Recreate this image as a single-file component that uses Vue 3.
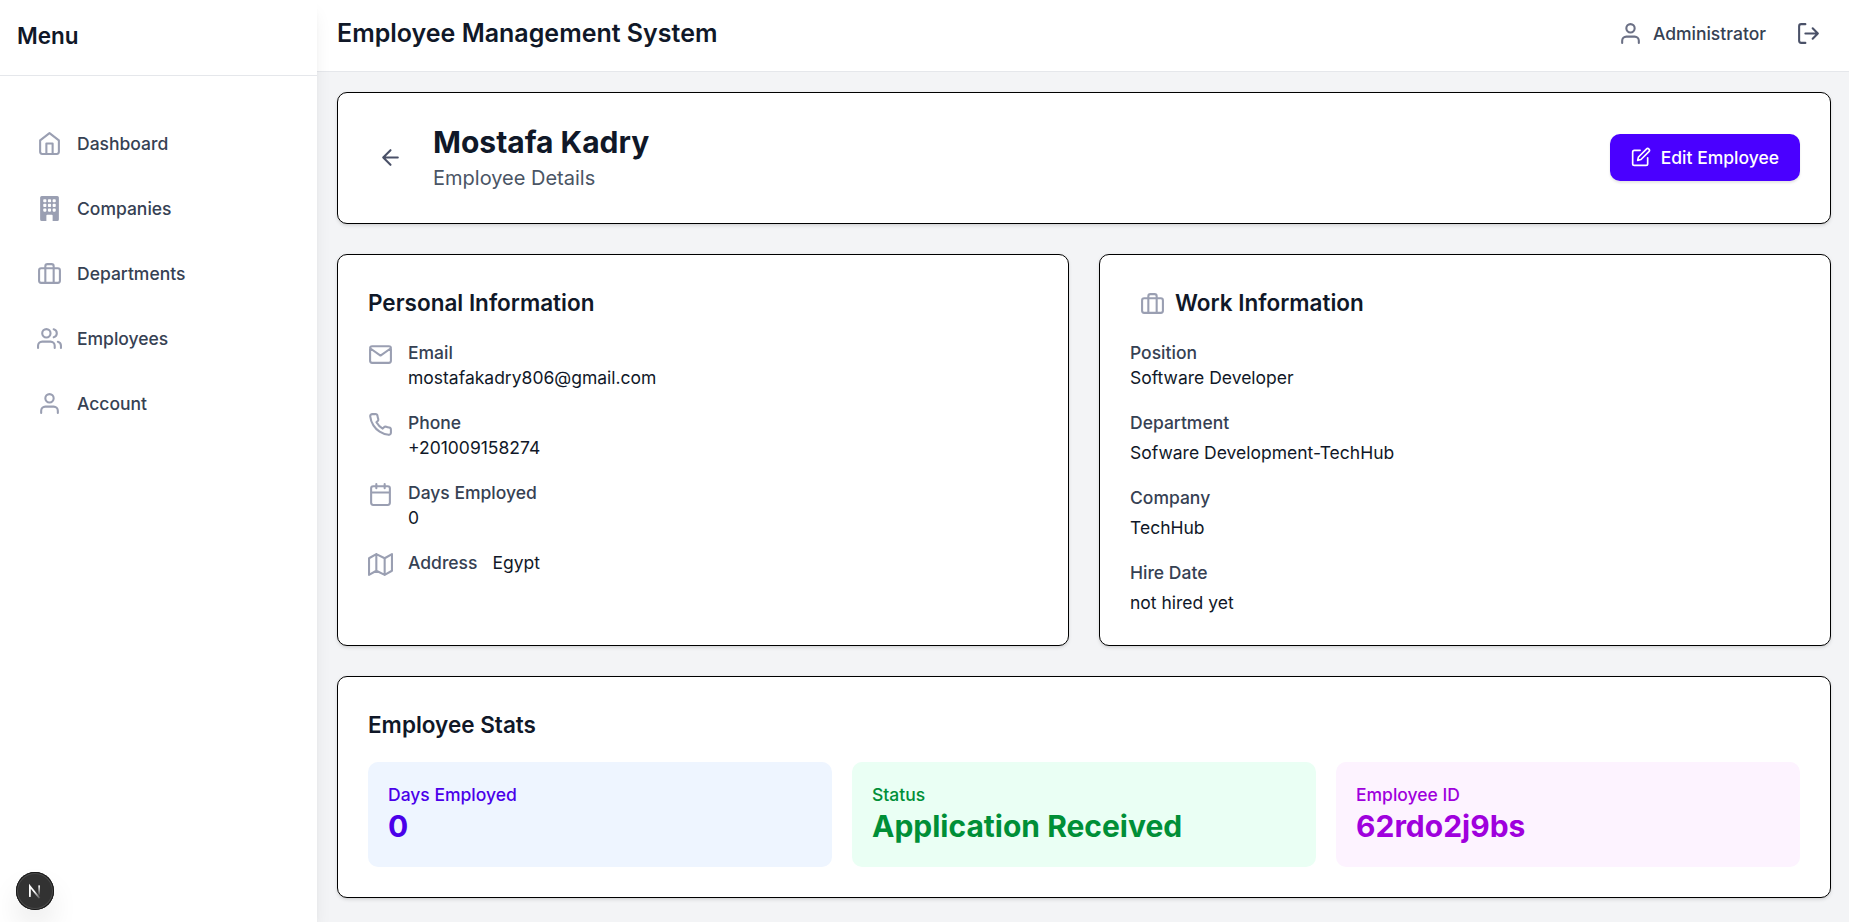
<script setup>
const nav = [
  { label: 'Dashboard', icon: 'home' },
  { label: 'Companies', icon: 'building' },
  { label: 'Departments', icon: 'briefcase' },
  { label: 'Employees', icon: 'users' },
  { label: 'Account', icon: 'user' },
]

const personal = [
  { label: 'Email', value: 'mostafakadry806@gmail.com', icon: 'mail' },
  { label: 'Phone', value: '+201009158274', icon: 'phone' },
  { label: 'Days Employed', value: '0', icon: 'calendar' },
  { label: 'Address', value: 'Egypt', icon: 'map', inline: true },
]

const work = [
  { label: 'Position', value: 'Software Developer', tight: true },
  { label: 'Department', value: 'Sofware Development-TechHub' },
  { label: 'Company', value: 'TechHub' },
  { label: 'Hire Date', value: 'not hired yet' },
]

const stats = [
  { label: 'Days Employed', value: '0', tone: 'blue' },
  { label: 'Status', value: 'Application Received', tone: 'green' },
  { label: 'Employee ID', value: '62rdo2j9bs', tone: 'purple' },
]

// Stroked icons on a 24-unit grid, one path each
const icons = {
  home: 'M3 9l9-7 9 7v11a2 2 0 0 1-2 2H5a2 2 0 0 1-2-2zM9 22V12h6v10',
  briefcase: 'M4 7h16a2 2 0 0 1 2 2v10a2 2 0 0 1-2 2H4a2 2 0 0 1-2-2V9a2 2 0 0 1 2-2zM16 21V5a2 2 0 0 0-2-2h-4a2 2 0 0 0-2 2v16',
  users: 'M17 21v-2a4 4 0 0 0-4-4H5a4 4 0 0 0-4 4v2M13 7a4 4 0 1 1-8 0 4 4 0 0 1 8 0zM23 21v-2a4 4 0 0 0-3-3.87M16 3.13a4 4 0 0 1 0 7.75',
  user: 'M20 21v-2a4 4 0 0 0-4-4H8a4 4 0 0 0-4 4v2M16 7a4 4 0 1 1-8 0 4 4 0 0 1 8 0z',
  mail: 'M4 4h16c1.1 0 2 .9 2 2v12c0 1.1-.9 2-2 2H4c-1.1 0-2-.9-2-2V6c0-1.1.9-2 2-2zM22 6l-10 7L2 6',
  phone: 'M22 16.92v3a2 2 0 0 1-2.18 2 19.79 19.79 0 0 1-8.63-3.07 19.5 19.5 0 0 1-6-6 19.79 19.79 0 0 1-3.07-8.67A2 2 0 0 1 4.11 2h3a2 2 0 0 1 2 1.72 12.84 12.84 0 0 0 .7 2.81 2 2 0 0 1-.45 2.11L8.09 9.91a16 16 0 0 0 6 6l1.27-1.27a2 2 0 0 1 2.11-.45 12.84 12.84 0 0 0 2.81.7A2 2 0 0 1 22 16.92z',
  calendar: 'M5 4h14a2 2 0 0 1 2 2v14a2 2 0 0 1-2 2H5a2 2 0 0 1-2-2V6a2 2 0 0 1 2-2zM16 2v4M8 2v4M3 10h18',
  map: 'M1 6v16l7-4 8 4 7-4V2l-7 4-8-4-7 4zM8 2v16M16 6v16',
}
const windows = [4, 7, 10].flatMap((x) => [2, 5, 8].map((y) => `M${x + 0.5} ${y}a.5.5 0 0 0-.5.5v1a.5.5 0 0 0 .5.5h1a.5.5 0 0 0 .5-.5v-1a.5.5 0 0 0-.5-.5z`)).join('')
const building = 'M3 0a1 1 0 0 0-1 1v14a1 1 0 0 0 1 1h3v-3.5a.5.5 0 0 1 .5-.5h3a.5.5 0 0 1 .5.5V16h3a1 1 0 0 0 1-1V1a1 1 0 0 0-1-1z' + windows
</script>

<template>
  <div class="app">
    <aside class="sidebar">
      <div class="menu-head">Menu</div>
      <nav class="nav">
        <a v-for="n in nav" :key="n.label" class="nav-item">
          <svg v-if="n.icon === 'building'" class="icon solid" viewBox="0 0 16 16"><path :d="building" /></svg>
          <svg v-else class="icon" viewBox="0 0 24 24"><path :d="icons[n.icon]" /></svg>
          <span>{{ n.label }}</span>
        </a>
      </nav>
    </aside>

    <div class="content">
      <header class="topbar">
        <h1>Employee Management System</h1>
        <div class="account">
          <svg class="icon mid" viewBox="0 0 24 24"><path :d="icons.user" /></svg>
          <span>Administrator</span>
          <button class="plain logout">
            <svg class="icon dark" viewBox="0 0 24 24"><path d="M9 21H5a2 2 0 0 1-2-2V5a2 2 0 0 1 2-2h4M16 17l5-5-5-5M21 12H9" /></svg>
          </button>
        </div>
      </header>

      <main class="main">
        <section class="card hero">
          <button class="plain">
            <svg class="icon dark" viewBox="0 0 24 24"><path d="M19 12H5M12 19l-7-7 7-7" /></svg>
          </button>
          <div class="who">
            <div class="name">Mostafa Kadry</div>
            <div class="sub">Employee Details</div>
          </div>
          <button class="edit">
            <svg class="icon small" viewBox="0 0 24 24"><path d="M11 4H4a2 2 0 0 0-2 2v14a2 2 0 0 0 2 2h14a2 2 0 0 0 2-2v-7M18.5 2.5a2.121 2.121 0 0 1 3 3L12 15l-4 1 1-4 9.5-9.5z" /></svg>
            <span>Edit Employee</span>
          </button>
        </section>

        <div class="columns">
          <section class="card">
            <h2>Personal Information</h2>
            <div class="list">
              <div v-for="p in personal" :key="p.label" class="row">
                <svg class="icon" viewBox="0 0 24 24"><path :d="icons[p.icon]" /></svg>
                <div :class="{ inline: p.inline }">
                  <div class="label">{{ p.label }}</div>
                  <div class="value">{{ p.value }}</div>
                </div>
              </div>
            </div>
          </section>
          <section class="card">
            <h2 class="with-icon">
              <svg class="icon" viewBox="0 0 24 24"><path :d="icons.briefcase" /></svg>
              <span>Work Information</span>
            </h2>
            <div class="list">
              <div v-for="w in work" :key="w.label" class="field" :class="{ tight: w.tight }">
                <div class="label">{{ w.label }}</div>
                <div class="value">{{ w.value }}</div>
              </div>
            </div>
          </section>
        </div>

        <section class="card">
          <h2>Employee Stats</h2>
          <div class="stats">
            <div v-for="s in stats" :key="s.label" class="stat" :class="s.tone">
              <div class="stat-label">{{ s.label }}</div>
              <div class="stat-value">{{ s.value }}</div>
            </div>
          </div>
        </section>
      </main>
    </div>

    <div class="badge">
      <svg viewBox="0 0 38 38">
        <defs>
          <linearGradient id="stem" x1="0" y1="0" x2="0" y2="1">
            <stop offset="0" stop-color="#fff" />
            <stop offset="1" stop-color="#fff" stop-opacity="0" />
          </linearGradient>
          <linearGradient id="slash" gradientUnits="userSpaceOnUse" x1="19" y1="19" x2="24.5" y2="26">
            <stop offset="0" stop-color="#fff" />
            <stop offset="1" stop-color="#fff" stop-opacity="0.1" />
          </linearGradient>
        </defs>
        <path d="M13.9 25V14.2L23.6 26.2" fill="none" stroke="url(#slash)" stroke-width="1.8" />
        <rect x="22.3" y="13.4" width="1.7" height="10.5" fill="url(#stem)" />
      </svg>
    </div>
  </div>
</template>

<style>
body {
  margin: 0;
  background: #f3f4f6;
}
</style>

<style scoped>
.app {
  display: flex;
  height: 922px;
  overflow: hidden;
  background: #f3f4f6;
  font-family: Inter, "Liberation Sans", sans-serif;
  font-size: 17.5px;
  line-height: 25px;
  color: #101828;
}
h1, h2 {
  margin: 0;
  font-weight: 600;
}
button {
  border: 0;
  font: inherit;
}
.icon {
  display: block;
  flex: none;
  width: 25px;
  height: 25px;
  fill: none;
  stroke: #9a9fb2;
  stroke-width: 2;
  stroke-linecap: round;
  stroke-linejoin: round;
}
.icon.solid {
  fill: #9a9fb2;
  fill-rule: evenodd;
  stroke: none;
}
.icon.mid { stroke: #6b7085; }
.icon.dark { stroke: #4a5168; }
.icon.small {
  width: 20px;
  height: 20px;
  stroke: #fff;
}
.plain {
  padding: 10px;
  background: none;
}

.sidebar {
  position: relative;
  z-index: 1;
  flex: none;
  width: 317px;
  background: #fff;
  box-shadow: 0 12.5px 18.75px -3.75px rgba(0, 0, 0, 0.1), 0 5px 7.5px -5px rgba(0, 0, 0, 0.1);
}
.menu-head {
  box-sizing: border-box;
  height: 76px;
  padding: 18px 17px;
  border-bottom: 1px solid #e5e7eb;
  font-size: 22.5px;
  line-height: 35px;
  font-weight: 600;
}
.nav {
  display: flex;
  flex-direction: column;
  gap: 20px;
  padding: 45px 22px;
}
.nav-item {
  display: flex;
  align-items: center;
  gap: 15px;
  padding: 10px 15px;
  font-weight: 500;
  color: #364153;
}

.content {
  flex: 1;
  min-width: 0;
}
.topbar {
  box-sizing: border-box;
  display: flex;
  align-items: center;
  justify-content: space-between;
  height: 72px;
  padding: 0 18px 5px 20px;
  background: #fff;
  border-bottom: 1px solid #e5e7eb;
}
.topbar h1 {
  font-size: 25px;
  line-height: 35px;
}
.account {
  display: flex;
  align-items: center;
  gap: 10px;
  font-weight: 500;
  color: #364153;
}
.logout { margin-left: 10px; }

.main {
  display: flex;
  flex-direction: column;
  gap: 30px;
  padding: 20px 18px 24px 20px;
}
.card {
  padding: 30px;
  background: #fff;
  border: 1px solid #000;
  border-radius: 10px;
  box-shadow: 0 1.25px 3.75px rgba(0, 0, 0, 0.1), 0 1.25px 2.5px -1.25px rgba(0, 0, 0, 0.1);
}
.hero {
  display: flex;
  align-items: center;
  padding: 29px 30px 31px;
}
.who { margin-left: 20px; }
.name {
  font-size: 30px;
  line-height: 40px;
  font-weight: 700;
}
.sub {
  padding-top: 1px;
  margin-bottom: -1px;
  font-size: 20px;
  line-height: 30px;
  color: #4a5565;
}
.edit {
  display: flex;
  align-items: center;
  gap: 10px;
  height: 47px;
  margin-left: auto;
  padding: 0 21px;
  background: #4a00ff;
  border-radius: 10px;
  color: #fff;
  font-weight: 500;
  box-shadow: 0 1.25px 2.5px rgba(0, 0, 0, 0.1);
}

.columns {
  display: grid;
  grid-template-columns: 1fr 1fr;
  gap: 30px;
}
h2 {
  margin-bottom: 20px;
  font-size: 22.5px;
  line-height: 35px;
}
.with-icon {
  display: flex;
  align-items: center;
  gap: 10px;
  padding-left: 10px;
}
.with-icon .icon {
  margin-top: 2px;
}
.list {
  display: flex;
  flex-direction: column;
  gap: 20px;
}
.row {
  display: flex;
  align-items: flex-start;
  gap: 15px;
}
.row .icon {
  margin-top: 2px;
  margin-bottom: -2px;
}
.inline {
  display: flex;
  gap: 15px;
}
.label {
  font-weight: 500;
  color: #364153;
}
.field .value { margin-top: 5px; }
.field.tight .value { margin-top: 0; }

.stats {
  display: grid;
  grid-template-columns: repeat(3, 1fr);
  gap: 20px;
}
.stat {
  padding: 20px;
  border-radius: 10px;
}
.stat-label { font-weight: 500; }
.stat-value {
  margin: -1px 0 1px;
  font-size: 30px;
  line-height: 40px;
  font-weight: 700;
}
.blue { background: #eef5ff; color: #4a00ea; }
.green { background: #eafff4; color: #008f37; }
.purple { background: #fdf3ff; color: #9f00dd; }

.badge {
  position: absolute;
  z-index: 2;
  left: 16px;
  top: 872px;
  box-sizing: border-box;
  width: 38px;
  height: 38px;
  border-radius: 50%;
  background: #323232;
  box-shadow: inset 0 0 0 1px #171717, inset 0 0 0 2px #4a4a4a, 0 16px 32px -8px rgba(0, 0, 0, 0.24);
}
.badge svg {
  display: block;
  width: 38px;
  height: 38px;
}
</style>
